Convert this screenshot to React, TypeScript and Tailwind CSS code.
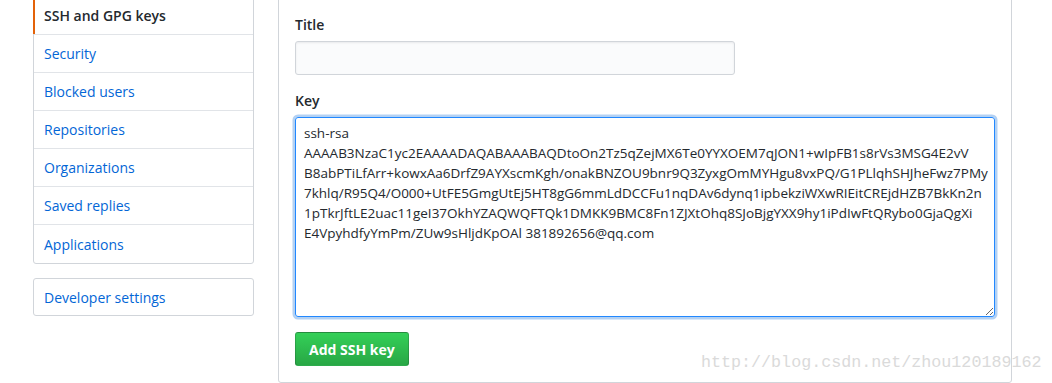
const menu = [
  "Security",
  "Blocked users",
  "Repositories",
  "Organizations",
  "Saved replies",
  "Applications",
];

const keyValue = [
  "ssh-rsa",
  "AAAAB3NzaC1yc2EAAAADAQABAAABAQDtoOn2Tz5qZejMX6Te0YYXOEM7qJON1+wIpFB1s8rVs3MSG4E2vV",
  "B8abPTiLfArr+kowxAa6DrfZ9AYXscmKgh/onakBNZOU9bnr9Q3ZyxgOmMYHgu8vxPQ/G1PLlqhSHJheFwz7PMy",
  "7khlq/R95Q4/O000+UtFE5GmgUtEj5HT8gG6mmLdDCCFu1nqDAv6dynq1ipbekziWXwRIEitCREjdHZB7BkKn2n",
  "1pTkrJftLE2uac11geI37OkhYZAQWQFTQk1DMKK9BMC8Fn1ZJXtOhq8SJoBjgYXX9hy1iPdIwFtQRybo0GjaQgXi",
  "E4VpyhdfyYmPm/ZUw9sHljdKpOAl 381892656@qq.com",
].join("\n");

const App = () => {
  return (
    <div className="relative w-[1052px] h-[383px] overflow-hidden bg-white font-['Segoe_UI','Open_Sans',sans-serif] text-[14px] text-[#24292e]">
      <div className="flex items-start gap-6 pl-[33px] -mt-[4px]">
        <div className="w-[221px] shrink-0">
          <nav className="border border-[#d1d5da] rounded-[3px] bg-white">
            <div className="relative h-[38px] flex items-center px-[10px] border-b border-[#e1e4e8] font-semibold">
              <span className="absolute left-[-1px] top-0 bottom-0 w-[2px] bg-[#e36209]" />
              SSH and GPG keys
            </div>
            {menu.map((m, i) => (
              <div
                key={m}
                className={`h-[38px] flex items-center px-[10px] text-[#0366d6] ${i < menu.length - 1 ? "border-b border-[#e1e4e8]" : ""}`}
              >
                {m}
              </div>
            ))}
          </nav>
          <div className="mt-[14px] border border-[#d1d5da] rounded-[3px] h-[38px] flex items-center px-[10px] text-[#0366d6]">
            Developer settings
          </div>
        </div>

        <div className="w-[734px] shrink-0 border border-[#d1d5da] rounded-[3px] px-4 pt-[17px] pb-4">
          <label className="block font-semibold leading-[21px] mb-[6px]">Title</label>
          <input className="block w-[440px] h-[34px] bg-[#fafbfc] border border-[#d1d5da] rounded-[3px] px-2 outline-none shadow-[inset_0_1px_2px_rgba(27,31,35,0.075)]" />
          <label className="block font-semibold leading-[21px] mt-[15px] mb-[6px]">Key</label>
          <textarea
            defaultValue={keyValue}
            spellCheck={false}
            className="block w-full h-[200px] border border-[#2188ff] rounded-[3px] px-2 pt-[5px] leading-[20px] whitespace-pre overflow-hidden resize-y outline-none shadow-[0_0_0_2.5px_rgba(3,102,214,0.3)] text-[13.5px] text-[#24292e]"
          />
          <button className="mt-[15px] h-[34px] px-[13px] rounded-[3px] border border-[rgba(27,31,35,0.2)] bg-gradient-to-b from-[#34d058] to-[#28a745] text-white font-bold">
            Add SSH key
          </button>
        </div>
      </div>

      <div className="absolute left-[701px] top-[350px] font-['Liberation_Mono',monospace] text-[16.7px] text-[#dadada] pointer-events-none">
        http://blog.csdn.net/zhou120189162
      </div>
    </div>
  );
};

export default App;
